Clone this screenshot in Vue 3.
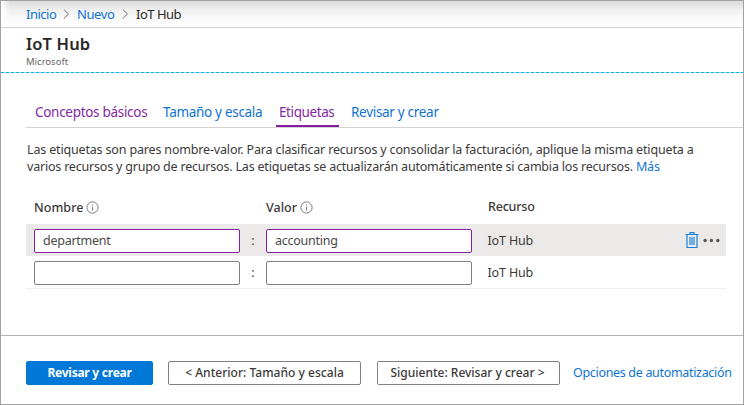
<script setup>
const tabs = [
  { label: 'Conceptos básicos', cls: 'visited t1' },
  { label: 'Tamaño y escala', cls: 't2' },
  { label: 'Etiquetas', cls: 'visited active t3' },
  { label: 'Revisar y crear', cls: 't4' },
]
const rows = [
  { name: 'department', value: 'accounting', resource: 'IoT Hub', selected: true },
  { name: '', value: '', resource: 'IoT Hub', selected: false },
]
</script>

<template>
  <div class="window">
    <nav class="crumbs">
      <a class="c1">Inicio</a>
      <svg class="chev" width="7" height="10" viewBox="0 0 7 10"><path d="M.8.6 5.6 5 .8 9.4" /></svg>
      <a class="c2">Nuevo</a>
      <svg class="chev" width="7" height="10" viewBox="0 0 7 10"><path d="M.8.6 5.6 5 .8 9.4" /></svg>
      <span class="c3">IoT Hub</span>
    </nav>
    <header class="title">
      <h1><span>IoT Hub</span></h1>
      <p><span>Microsoft</span></p>
    </header>
    <div class="dash"></div>
    <div class="tabs">
      <a v-for="t in tabs" :key="t.label" class="tab" :class="t.cls"><span>{{ t.label }}</span></a>
    </div>
    <p class="desc">
      <span class="l1">Las etiquetas son pares nombre-valor. Para clasificar recursos y consolidar la facturación, aplique la misma etiqueta a</span><br>
      <span class="l2">varios recursos y grupo de recursos. Las etiquetas se actualizarán automáticamente si cambia los recursos. <a>Más</a></span>
    </p>
    <div class="grid head">
      <div class="th"><span>Nombre</span>
        <svg class="info" width="13" height="13" viewBox="0 0 13 13"><circle cx="6.5" cy="6.5" r="5.6" /><path d="M6.5 5.6v4M6.5 3.4v1.1" /></svg>
      </div>
      <div></div>
      <div class="th"><span>Valor</span>
        <svg class="info" width="13" height="13" viewBox="0 0 13 13"><circle cx="6.5" cy="6.5" r="5.6" /><path d="M6.5 5.6v4M6.5 3.4v1.1" /></svg>
      </div>
      <div class="th res"><span>Recurso</span></div>
    </div>
    <div v-for="(r, i) in rows" :key="i" class="grid row" :class="{ selected: r.selected }">
      <div class="field"><span>{{ r.name }}</span></div>
      <div class="colon">:</div>
      <div class="field"><span>{{ r.value }}</span></div>
      <div class="resource"><span>{{ r.resource }}</span></div>
      <div v-if="r.selected" class="actions">
        <svg width="14" height="17" viewBox="0 0 14 17">
          <path class="lid" d="M.5 2.5h13M5 2V.7h4V2" />
          <path class="can" d="M2 3v12.5h10V3" />
          <path class="fill" d="M4 5h6v8H4z" />
        </svg>
        <svg width="17" height="5" viewBox="0 0 17 5" class="dots">
          <circle cx="2.1" cy="2.5" r="1.7" /><circle cx="8.4" cy="2.5" r="1.7" /><circle cx="14.8" cy="2.5" r="1.7" />
        </svg>
      </div>
    </div>
    <footer>
      <button class="primary"><span>Revisar y crear</span></button>
      <button class="prev"><span>&lt; Anterior: Tamaño y escala</span></button>
      <button class="next"><span>Siguiente: Revisar y crear &gt;</span></button>
      <a><span>Opciones de automatización</span></a>
    </footer>
  </div>
</template>

<style>
body { margin: 0; background: #fff; }
</style>

<style scoped>
* { box-sizing: border-box; }
.window {
  width: 744px; height: 405px; border: 1px solid #a2a2a2; overflow: hidden;
  display: flex; flex-direction: column; background: #fff; color: #3b3a39;
  font-family: "Noto Sans", sans-serif; font-size: 12.5px; white-space: nowrap;
}
span { display: inline-block; }
h1, p { margin: 0; }
a { color: #0f74d1; }
.crumbs {
  height: 27px; flex: none; display: flex; align-items: center; padding: 0 0 0 25px;
  border-bottom: 1px solid #d2d2d2; font-size: 13px; line-height: 18px;
  background: linear-gradient(90deg, #fff, transparent 9px), linear-gradient(#dcdcdc, #f0f0f0 35%, #fbfbfb 70%, #fff);
}
.c1 { width: 30px; letter-spacing: -.5px; }
.c2 { width: 38px; letter-spacing: -.4px; }
.c3 { letter-spacing: -.5px; color: #292827; }
.chev { margin: 0 7px; fill: none; stroke: #777; stroke-width: 1; }
.title { height: 44px; flex: none; padding-left: 25px; }
.title h1 { font-size: 16.5px; line-height: 24px; font-weight: 600; padding-top: 4px; letter-spacing: .15px; color: #292827; }
.title p { font-size: 9.5px; line-height: 12px; color: #666; }
.dash { height: 1px; flex: none; background: repeating-linear-gradient(90deg, #00b7ea 0 3px, #b2d4df 3px 5px); }
.tabs { height: 29px; flex: none; margin: 26px 0 0 25px; border-bottom: 1px solid #d2d2d2; display: flex; }
.tab { height: 28px; font-size: 13.5px; line-height: 27px; border-bottom: 2px solid transparent; letter-spacing: -.3px; }
.tab.visited { color: #8428a4; }
.tab.active { border-color: #881ea4; }
.t1 { width: 128px; padding-left: 9px; }
.t2 { width: 122px; padding-left: 9px; }
.t3 { width: 63px; padding-left: 3px; letter-spacing: -.4px; }
.t4 { padding-left: 12px; }
.desc { padding: 13px 0 0 26px; line-height: 17px; height: 61px; flex: none; }
.desc .l1 { letter-spacing: -.163px; }
.desc .l2 { letter-spacing: -.2px; }
.grid { display: grid; grid-template-columns: 206px 26px 206px 1fr 36px; margin-left: 25px; width: 700px; padding-left: 8px; flex: none; align-items: center; }
.head { height: 35px; font-weight: 500; }
.th { display: flex; align-items: center; gap: 3px; line-height: 18px; }
.th:not(.res) span { padding-top: 2px; letter-spacing: .05px; }
.info { fill: none; stroke: #6c6c6c; stroke-width: .9; margin-top: 1px; }
.row { height: 32px; }
.row:not(.selected) { height: 33px; border-bottom: 1px solid #eee; }
.row.selected { background: #ebeae9; }
.field { height: 24px; margin-top: 1px; border: 1px solid #808080; border-radius: 2px; background: #fff; padding-left: 8px; line-height: 21px; letter-spacing: -.25px; color: #4a4948; }
.selected .field { border-color: #881ea4; }
.colon { text-align: center; }
.res { padding-left: 16px; letter-spacing: -.2px; }
.resource { padding-left: 15.5px; letter-spacing: -.15px; }
.actions { display: flex; align-items: center; gap: 4px; margin-left: -5px; padding-top: 1px; }
.lid, .can { fill: none; stroke: #1b80d7; stroke-width: 1.2; }
.fill { fill: #72afe0; }
.dots { fill: #555; }
footer { margin-top: auto; height: 69px; flex: none; border-top: 1px solid #b2b2b2; display: flex; align-items: flex-start; padding: 25px 0 0 25px; }
button { font: 500 12px/20px "Noto Sans", sans-serif; height: 24px; padding: 0; border: 1px solid #808080; border-radius: 2px; background: #fff; color: #3b3a39; white-space: nowrap; }
.primary { width: 127px; background: #0078d7; border-color: #0078d7; color: #fff; font-weight: 700; margin-right: 15px; letter-spacing: -.25px; }
.prev { width: 193px; margin-right: 16px; letter-spacing: .03px; }
.next { width: 183px; padding-right: 2px; margin-right: 13px; letter-spacing: 0; }
footer a { line-height: 23px; letter-spacing: -.32px; }
</style>
